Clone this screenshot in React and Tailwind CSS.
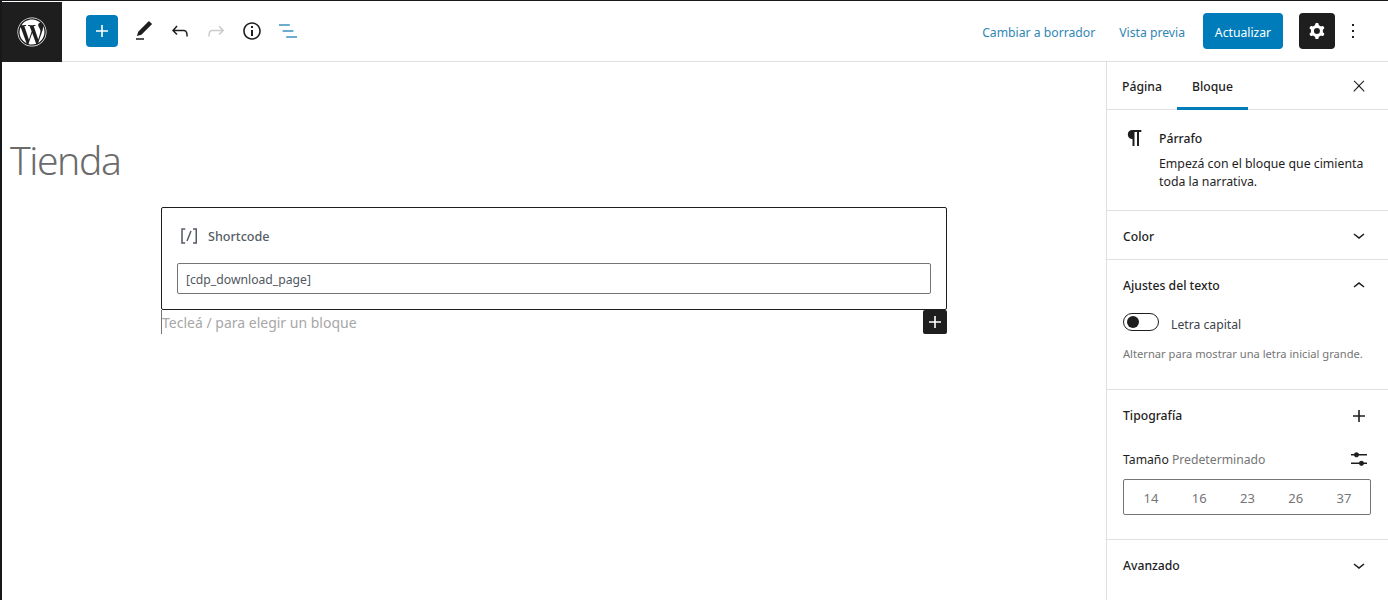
import React from "react";
import { FaWordpress } from "react-icons/fa";

const Icon = ({ d, size = 24, className = "", fillRule }) => (
	<svg width={size} height={size} viewBox="0 0 24 24" fill="currentColor" className={className}>
		<path d={d} fillRule={fillRule} clipRule={fillRule} />
	</svg>
);

const icons = {
	plus: "M18 11.2h-5.2V6h-1.6v5.2H6v1.6h5.2V18h1.6v-5.2H18z",
	pencil: "M20.1 5.1L16.9 2 6.2 12.7l-1.3 4.4 4.5-1.3L20.1 5.1zM4 20.8h8v-1.5H4v1.5z",
	undo: "M18.3 11.7c-.6-.6-1.4-.9-2.3-.9H6.7l2.9-3.3-1.1-1-4.5 5L8.5 16l1-1-2.7-2.7H16c.5 0 .9.2 1.3.5 1 1 1 3.4 1 4.5v.3h1.5v-.2c0-1.5 0-4.3-1.5-5.7z",
	redo: "M15.6 6.5l-1.1 1 2.9 3.3H8c-.9 0-1.7.3-2.3.9-1.4 1.5-1.4 4.2-1.4 5.6v.2h1.5v-.3c0-1.1 0-3.5 1-4.5.3-.3.7-.5 1.3-.5h9.2L14.5 15l1.1 1.1 4.6-4.6-4.6-5z",
	info: "M12 3.2c-4.8 0-8.8 3.9-8.8 8.8 0 4.8 3.9 8.8 8.8 8.8 4.8 0 8.8-3.9 8.8-8.8 0-4.8-4-8.8-8.8-8.8zm0 16c-4 0-7.2-3.3-7.2-7.2C4.8 8 8 4.8 12 4.8s7.2 3.3 7.2 7.2c0 4-3.2 7.2-7.2 7.2zM11 17h2v-6h-2v6zm0-8h2V7h-2v2z",
	list: "M13.8 5.2H3v1.5h10.8V5.2zm-3.6 12v1.5H21v-1.5H10.2zm7.2-6H6.6v1.5h10.8v-1.5z",
	cog: "M10.289 4.836A1 1 0 0111.275 4h1.306a1 1 0 01.987.836l.244 1.466c.787.26 1.503.679 2.108 1.218l1.393-.522a1 1 0 011.216.437l.653 1.13a1 1 0 01-.23 1.273l-1.148.944a6.025 6.025 0 010 2.435l1.149.946a1 1 0 01.23 1.272l-.653 1.13a1 1 0 01-1.216.437l-1.394-.522c-.605.54-1.32.958-2.108 1.218l-.244 1.466a1 1 0 01-.987.836h-1.306a1 1 0 01-.986-.836l-.244-1.466a5.995 5.995 0 01-2.108-1.218l-1.394.522a1 1 0 01-1.217-.436l-.653-1.131a1 1 0 01.23-1.272l1.149-.946a6.026 6.026 0 010-2.435l-1.148-.944a1 1 0 01-.23-1.272l.653-1.131a1 1 0 011.217-.437l1.393.522a5.994 5.994 0 012.108-1.218l.244-1.466zM14.929 12a3 3 0 11-6 0 3 3 0 016 0z",
	more: "M13 19h-2v-2h2v2zm0-6h-2v-2h2v2zm0-6h-2V5h2v2z",
	close: "M13 11.8l6.1-6.3-1-1-6.1 6.2-6.1-6.2-1 1 6.1 6.3-6.5 6.7 1 1 6.5-6.6 6.5 6.6 1-1z",
	chevronDown: "M17.5 11.6L12 16l-5.5-4.4.9-1.2L12 14l4.5-3.6 1 1.2z",
	chevronUp: "M6.5 12.4L12 8l5.5 4.4-.9 1.2L12 10l-4.5 3.6-1-1.2z",
	paragraph: "M10.5 4C7.5 4 5.8 6 5.8 8.5S7.5 13 10.5 13v7h2V6H15v14h2V6h2.3V4z",
	sliders: "M14.5 13.8c-1.1 0-2.1.7-2.4 1.8H4V17h8.1c.3 1 1.3 1.8 2.4 1.8s2.1-.7 2.4-1.8H20v-1.5h-3.1c-.3-1-1.3-1.7-2.4-1.7zM11.9 7c-.3-1-1.3-1.8-2.4-1.8S7.4 6 7.1 7H4v1.5h3.1c.3 1 1.3 1.8 2.4 1.8s2.1-.7 2.4-1.8H20V7h-8.1z",
	shortcode: "M16 4.2v1.5h2.5v12.5H16v1.5h4V4.2h-4zM4.2 19.8h4v-1.5H5.8V5.8h2.5V4.2h-4l-.1 15.6zm5.1-3.1l1.4.6 4-10-1.4-.6-4 10z",
};

const ToolButton = ({ d, className = "text-[#1e1e1e]" }) => (
	<div className="w-9 h-9 flex items-center justify-center">
		<Icon d={d} className={className} />
	</div>
);

const PanelRow = ({ title, icon, border = true }) => (
	<div className={`h-[49px] flex items-center justify-between pl-4 pr-[17px] ${border ? "border-b border-[#e0e0e0]" : ""}`}>
		<span className="font-medium pt-1">{title}</span>
		<Icon d={icon} className="text-[#1e1e1e]" />
	</div>
);

const sizes = ["14", "16", "23", "26", "37"];

const App = () => {
	return (
		<div className="w-[1388px] h-[600px] overflow-hidden bg-white border-t border-l-2 border-[#16181b] flex flex-col text-[12.2px] text-[#1e1e1e] font-['Noto_Sans',sans-serif]">
			{/* top bar */}
			<header className="h-[61px] shrink-0 flex items-center border-b border-[#e0e0e0]">
				<div className="w-[60px] h-[60px] -mb-px bg-[#1e1e1e] flex items-center justify-center text-white">
					<FaWordpress size={30} />
				</div>
				<div className="ml-6 w-8 h-8 rounded-sm bg-[#007cba] flex items-center justify-center text-white">
					<Icon d={icons.plus} />
				</div>
				<div className="ml-2 flex items-center">
					<ToolButton d={icons.pencil} />
					<ToolButton d={icons.undo} />
					<ToolButton d={icons.redo} className="text-[#cccccc]" />
					<ToolButton d={icons.info} />
					<ToolButton d={icons.list} className="text-[#3a93bf]" />
				</div>
				<div className="ml-auto flex items-center text-[#2f86b5]">
					<span className="pt-1">Cambiar a borrador</span>
					<span className="ml-6 pt-1">Vista previa</span>
					<div className="ml-[18px] w-20 h-9 pt-1 rounded-sm bg-[#007cba] text-white flex items-center justify-center">Actualizar</div>
					<div className="ml-4 w-9 h-9 rounded-sm bg-[#1e1e1e] text-white flex items-center justify-center">
						<Icon d={icons.cog} fillRule="evenodd" />
					</div>
					<div className="ml-1.5 mr-[23px] w-6 h-9 flex items-center justify-center text-[#1e1e1e]">
						<Icon d={icons.more} />
					</div>
				</div>
			</header>

			<div className="flex-1 flex min-h-0">
				{/* editor canvas */}
				<main className="flex-1 min-w-0 flex flex-col">
					<h1 className="mt-[74px] ml-2 text-[39px] leading-[48px] font-light tracking-[-1.4px] text-[#6b6b6b]">Tienda</h1>
					<div className="ml-[159px] w-[786px] mt-[23px]">
						<div className="h-[103px] border border-[#1e1e1e] rounded-[2px] px-[15px] pt-[14px]">
							<div className="h-7 flex items-center gap-[7px] text-[#555d66]">
								<Icon d={icons.shortcode} />
								<span className="font-medium text-[12.6px] pt-0.5">Shortcode</span>
							</div>
							<div className="mt-[13px] h-[31px] border border-[#757575] rounded-[2px] flex items-center px-2 pt-1 text-[#50575e]">[cdp_download_page]</div>
						</div>
						<div className="relative h-6 flex items-center">
							<span className="text-[14px] text-[#a7a7a7] border-l border-[#757575] leading-[22px] pt-0.5">Tecleá / para elegir un bloque</span>
							<div className="absolute right-0 top-0 w-6 h-6 rounded-[2px] bg-[#1e1e1e] text-white flex items-center justify-center">
								<Icon d={icons.plus} />
							</div>
						</div>
					</div>
				</main>

				{/* settings sidebar */}
				<aside className="w-[282px] shrink-0 border-l border-[#e0e0e0]">
					<div className="h-[48px] flex items-stretch justify-between border-b border-[#e0e0e0] pr-5">
						<div className="flex">
							<span className="w-[70px] pt-1 flex items-center justify-center font-medium">Página</span>
							<span className="w-[71px] pt-[6px] flex items-center justify-center font-medium border-b-[3px] border-[#007cba] -mb-px">Bloque</span>
						</div>
						<div className="flex items-center">
							<Icon d={icons.close} size={18} />
						</div>
					</div>

					<div className="h-[101px] border-b border-[#e0e0e0] flex pl-[15px] pt-4">
						<Icon d={icons.paragraph} className="shrink-0" />
						<div className="ml-[13px] pr-4 pt-px">
							<div className="font-medium leading-6">Párrafo</div>
							<p className="mt-1 text-[12.3px] leading-[18px] w-[210px]">Empezá con el bloque que cimienta toda la narrativa.</p>
						</div>
					</div>

					<PanelRow title="Color" icon={icons.chevronDown} />

					<div className="h-[130px] border-b border-[#e0e0e0] pl-4 pr-[17px]">
						<div className="h-[51px] flex items-center justify-between">
							<span className="font-medium pt-0.5">Ajustes del texto</span>
							<Icon d={icons.chevronUp} />
						</div>
						<div className="flex items-start mt-[2px]">
							<div className="w-9 h-[18px] rounded-full border border-[#1e1e1e] flex items-center pl-[3px]">
								<div className="w-3 h-3 rounded-full bg-[#1e1e1e]" />
							</div>
							<span className="ml-3 h-[18px] leading-[18px] pt-[3px] text-[#3c434a]">Letra capital</span>
						</div>
						<p className="mt-[14px] text-[11.15px] leading-[18px] text-[#757575] whitespace-nowrap">Alternar para mostrar una letra inicial grande.</p>
					</div>

					<div className="h-[150px] border-b border-[#e0e0e0] pl-4 pr-[17px]">
						<div className="h-[51px] flex items-center justify-between">
							<span className="font-medium pt-0.5">Tipografía</span>
							<Icon d={icons.plus} />
						</div>
						<div className="h-6 mt-[6px] flex items-center justify-between">
							<span className="pt-0.5">
								Tamaño <span className="text-[#757575]">Predeterminado</span>
							</span>
							<Icon d={icons.sliders} />
						</div>
						<div className="mt-2 w-[248px] h-9 pt-1 border border-[#757575] rounded-[2px] flex items-center justify-between pl-[15px] pr-[14px] text-[13px] text-[#757575]">
							{sizes.map((size) => (
								<span key={size} className="w-[24px] text-center">{size}</span>
							))}
						</div>
					</div>

					<PanelRow title="Avanzado" icon={icons.chevronDown} border={false} />
				</aside>
			</div>
		</div>
	);
};

export default App;
